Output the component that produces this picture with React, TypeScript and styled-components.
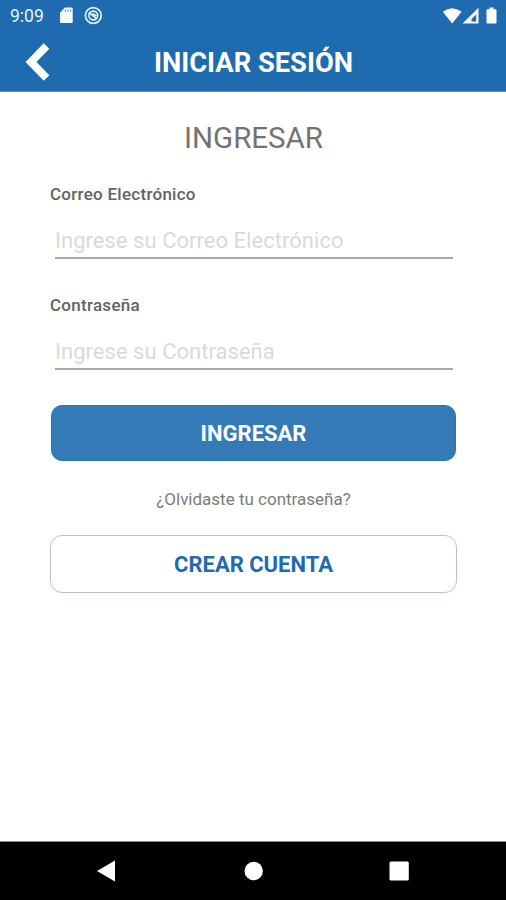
import React from "react";
import styled, { createGlobalStyle } from "styled-components";

const GlobalStyle = createGlobalStyle`
  *, *::before, *::after { box-sizing: border-box; }
  body { margin: 0; background: #fff; }
  button, input { font-family: inherit; }
`;

const Screen = styled.div`
  display: flex;
  flex-direction: column;
  width: 506px;
  height: 900px;
  overflow: hidden;
  background: #fff;
  font-family: Roboto, "Noto Sans", sans-serif;
`;

const Header = styled.header`
  height: 92px;
  flex: none;
  background: #1e6bb0;
  border-bottom: 1px solid #5b92c4;
  color: #fff;
`;

const StatusBar = styled.div`
  display: flex;
  align-items: center;
  height: 32px;
  padding: 0 8px 0 10px;
`;

const Clock = styled.span`
  width: 49px;
  font-size: 17.5px;
  line-height: 32px;
  color: #e9f3fc;
`;

const StatusIcons = styled.svg<{ $end?: boolean }>`
  display: block;
  margin-left: ${(p) => (p.$end ? "auto" : "0")};
`;

const TitleBar = styled.div`
  display: grid;
  grid-template-columns: 76px 1fr 76px;
  align-items: center;
  height: 60px;
`;

const BackButton = styled.button`
  width: 76px;
  height: 60px;
  padding: 0;
  border: 0;
  background: none;
  color: inherit;
`;

const Title = styled.h1`
  margin: 0;
  padding: 1px 0 0 1px;
  font-size: 27.3px;
  line-height: 60px;
  font-weight: 700;
  text-align: center;
  white-space: nowrap;
`;

const Form = styled.main`
  display: flex;
  flex-direction: column;
  flex: 1;
  padding: 26px 49px 0 50px;
`;

const Heading = styled.h2`
  margin: 0 0 24px;
  font-size: 29.5px;
  line-height: 40px;
  font-weight: 400;
  color: #737373;
  text-align: center;
`;

const Field = styled.label`
  display: flex;
  flex-direction: column;
  height: 111px;
`;

const Label = styled.span`
  font-size: 17px;
  line-height: 24px;
  font-weight: 500;
  letter-spacing: 0.27px;
  color: #636363;
`;

const Input = styled.input`
  height: 36px;
  margin: 17px 4px 0 5px;
  padding: 0;
  border: 0;
  border-bottom: 2px solid #a8a8a8;
  border-radius: 0;
  outline: 0;
  background: none;
  font-size: 22px;
  letter-spacing: 0.03px;
  color: #636363;
  &::placeholder { color: #dadada; opacity: 1; }
`;

const PrimaryButton = styled.button`
  width: 405px;
  height: 56px;
  margin: 1px 0 0 1px;
  padding: 0;
  border: 1px solid #2a73b3;
  border-radius: 11px;
  background: #337ab7;
  color: #fff;
  font-size: 22px;
  font-weight: 700;
`;

const ForgotLink = styled.a`
  margin: 26px 0 24px;
  font-size: 17px;
  line-height: 24px;
  text-align: center;
  color: #7c7c7c;
`;

const SecondaryButton = styled.button`
  width: 407px;
  height: 58px;
  padding: 0;
  border: 1px solid #b9bfd9;
  border-radius: 12px;
  background: #fff;
  color: #1f6bae;
  font-size: 22px;
  font-weight: 700;
`;

const NavBar = styled.nav`
  display: flex;
  align-items: center;
  flex: none;
  height: 59px;
  border-top: 1px solid #8a8a8a;
  background: #000;
`;

const App: React.FC = () => (
  <Screen>
    <GlobalStyle />
    <Header>
      <StatusBar>
        <Clock>9:09</Clock>
        <StatusIcons width="46" height="20" viewBox="0 0 46 20">
          <path d="M6 1.500h6.500q1.200 0 1.200 1.200v13.200q0 1.200-1.200 1.200H2.200Q1 17.100 1 15.900V6.500z" fill="#f3f8fd" />
          <path d="M6.500 3.500v2.500M9 3.500v2.500M11.500 3.500v2.500" stroke="#7ba8d2" strokeWidth="1.200" />
          <circle cx="34.300" cy="9.500" r="7.900" fill="none" stroke="#e9f3fc" strokeWidth="1.700" />
          <circle cx="34.300" cy="9.500" r="4.400" fill="none" stroke="#e9f3fc" strokeWidth="1.600" />
          <path d="M29.800 6.300l8 6.500M33.500 7.500l4 2.500" fill="none" stroke="#e9f3fc" strokeWidth="1.500" />
        </StatusIcons>
        <StatusIcons $end width="56" height="20" viewBox="0 0 56 20">
          <path d="M.8 5.800Q10.200-1.500 19.600 5.800L10.200 17.500z" fill="#fff" />
          <path fillRule="evenodd" d="M36.500 1.800V17.500H20.500zM34.200 8.500L29.500 13v2.500h4.700z" fill="#f3f8fd" />
          <path d="M47.500 1.500h4v1.700h2q1 0 1 1v12.300q0 1-1 1h-8q-1 0-1-1V4.200q0-1 1-1h2z" fill="#fff" />
        </StatusIcons>
      </StatusBar>
      <TitleBar>
        <BackButton aria-label="Volver">
          <svg width="76" height="60" viewBox="0 0 76 60">
            <path d="M46.500 13L31 29L46.500 45" fill="none" stroke="#fff" strokeWidth="7.800" />
          </svg>
        </BackButton>
        <Title>INICIAR SESIÓN</Title>
      </TitleBar>
    </Header>
    <Form>
      <Heading>INGRESAR</Heading>
      <Field>
        <Label>Correo Electrónico</Label>
        <Input type="email" placeholder="Ingrese su Correo Electrónico" />
      </Field>
      <Field>
        <Label>Contraseña</Label>
        <Input type="password" placeholder="Ingrese su Contraseña" />
      </Field>
      <PrimaryButton type="button">INGRESAR</PrimaryButton>
      <ForgotLink>¿Olvidaste tu contraseña?</ForgotLink>
      <SecondaryButton type="button">CREAR CUENTA</SecondaryButton>
    </Form>
    <NavBar>
      <svg width="506" height="58" viewBox="0 0 506 58">
        <path d="M97 29l18-10.500v21z" fill="#fff" />
        <circle cx="253.700" cy="29" r="9.200" fill="#fff" />
        <rect x="389.500" y="19.500" width="19.300" height="19" rx="1.500" fill="#fff" />
      </svg>
    </NavBar>
  </Screen>
);

export default App;
